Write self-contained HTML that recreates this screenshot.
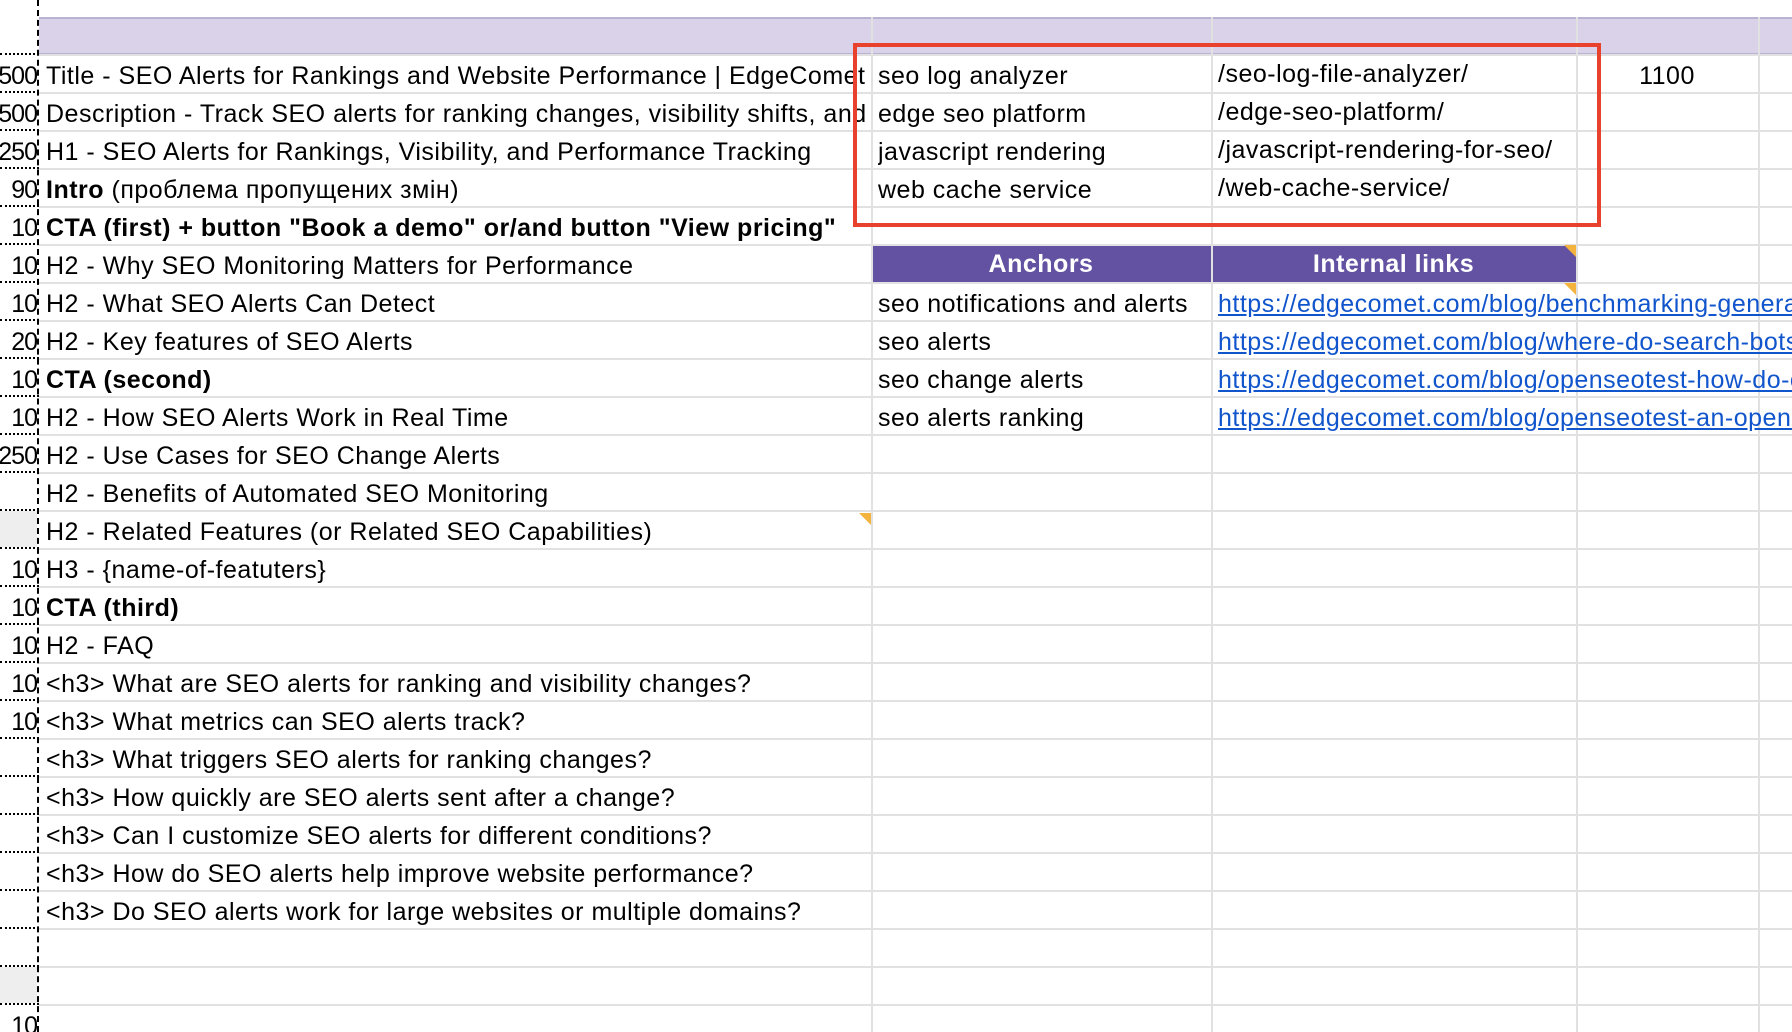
<!DOCTYPE html>
<html><head><meta charset="utf-8"><style>
*{margin:0;padding:0;box-sizing:border-box}
html,body{width:1792px;height:1032px;overflow:hidden}
body{background:#fff;font-family:"Liberation Sans","DejaVu Sans",sans-serif;font-size:25px;letter-spacing:0.5px;color:#000;position:relative}
.h{position:absolute;left:39px;right:0;height:2px;background:#e1e1e1}
.v{position:absolute;top:17px;bottom:0;width:2px;background:#e1e1e1}
.t{position:absolute;white-space:nowrap;line-height:38px;height:38px}
.n{position:absolute;left:0;width:37px;overflow:hidden;line-height:38px;height:38px;letter-spacing:-1px;white-space:nowrap}
.n span{float:right}
.d{position:absolute;left:0;width:39px;border-bottom:2px dotted #000}
b{font-weight:bold}
a{color:#1155cc;text-decoration:underline}
</style></head><body>
<div style="position:absolute;left:39px;right:0;top:17px;height:38px;background:#d9d2e9;border-top:2px solid #b9b3d3;border-bottom:2px solid #b9b3d3"></div>
<div style="position:absolute;left:871px;top:245px;width:705px;height:38px;background:#6351a2"></div>
<div class="v" style="left:871px"></div><div class="v" style="left:1211px"></div><div class="v" style="left:1576px"></div><div class="v" style="left:1758px"></div>
<div style="position:absolute;left:0;top:511px;width:37px;height:36px;background:#eee"></div>
<div style="position:absolute;left:0;top:967px;width:37px;height:36px;background:#eee"></div>
<div id="g"></div>
<div style="position:absolute;left:37px;top:0;bottom:0;border-left:2px dashed #000"></div>
<div style="position:absolute;left:853px;top:43px;width:748px;height:184px;border:4px solid #e8412c"></div>
<div class="t" style="left:871px;top:245px;width:340px;text-align:center;color:#fff;font-weight:bold">Anchors</div>
<div class="t" style="left:1211px;top:245px;width:365px;text-align:center;color:#fff;font-weight:bold">Internal links</div>
<div style="position:absolute;left:1564px;top:245px;border-left:12px solid transparent;border-top:12px solid #f3b33d"></div>
<div style="position:absolute;left:1564px;top:283px;border-left:12px solid transparent;border-top:12px solid #f3b33d"></div>
<div style="position:absolute;left:859px;top:513px;border-left:12px solid transparent;border-top:12px solid #f3b33d"></div>
<script>
var L=[["500","Title - SEO Alerts for Rankings and Website Performance | EdgeComet"],["500","Description - Track SEO alerts for ranking changes, visibility shifts, and"],["250","H1 - SEO Alerts for Rankings, Visibility, and Performance Tracking"],["90","<b>Intro</b> (проблема пропущених змін)"],["10","<b>CTA (first) + button \"Book a demo\" or/and button \"View pricing\"</b>"],["10","H2 - Why SEO Monitoring Matters for Performance"],["10","H2 - What SEO Alerts Can Detect"],["20","H2 - Key features of SEO Alerts"],["10","<b>CTA (second)</b>"],["10","H2 - How SEO Alerts Work in Real Time"],["250","H2 - Use Cases for SEO Change Alerts"],["","H2 - Benefits of Automated SEO Monitoring"],["","H2 - Related Features (or Related SEO Capabilities)"],["10","H3 - {name-of-featuters}"],["10","<b>CTA (third)</b>"],["10","H2 - FAQ"],["10","&lt;h3&gt; What are SEO alerts for ranking and visibility changes?"],["10","&lt;h3&gt; What metrics can SEO alerts track?"],["","&lt;h3&gt; What triggers SEO alerts for ranking changes?"],["","&lt;h3&gt; How quickly are SEO alerts sent after a change?"],["","&lt;h3&gt; Can I customize SEO alerts for different conditions?"],["","&lt;h3&gt; How do SEO alerts help improve website performance?"],["","&lt;h3&gt; Do SEO alerts work for large websites or multiple domains?"],["",""],["",""],["10",""]];
var R={0:["seo log analyzer","/seo-log-file-analyzer/"],1:["edge seo platform","/edge-seo-platform/"],2:["javascript rendering","/javascript-rendering-for-seo/"],3:["web cache service","/web-cache-service/"],6:["seo notifications and alerts","<a>https://edgecomet.com/blog/benchmarking-generative-engines</a>"],7:["seo alerts","<a>https://edgecomet.com/blog/where-do-search-bots-go</a>"],8:["seo change alerts","<a>https://edgecomet.com/blog/openseotest-how-do-crawlers</a>"],9:["seo alerts ranking","<a>https://edgecomet.com/blog/openseotest-an-open-test</a>"]};
var h="";
for(var i=0;i<27;i++){var y=55+38*i;if(y>1030)break;h+='<div class="h" style="top:'+(y-1)+'px"></div><div class="d" style="top:'+(y-2)+'px"></div>';}
for(var i=0;i<L.length;i++){var y=57+38*i;
h+='<div class="n" style="top:'+y+'px"><span>'+L[i][0]+'</span></div>';
var w=i<2?'width:825px;overflow:hidden;':'';
h+='<div class="t" style="left:46px;top:'+y+'px;'+w+'">'+L[i][1]+'</div>';
if(R[i]){h+='<div class="t" style="left:878px;top:'+y+'px;width:333px;overflow:hidden">'+R[i][0]+'</div><div class="t" style="left:1218px;width:574px;overflow:hidden;top:'+(i<4?y-2:y)+'px">'+R[i][1]+'</div>';}
}
h+='<div class="t" style="left:1576px;width:182px;text-align:center;top:57px">1100</div>';
document.getElementById("g").innerHTML=h;
</script>
</body></html>
